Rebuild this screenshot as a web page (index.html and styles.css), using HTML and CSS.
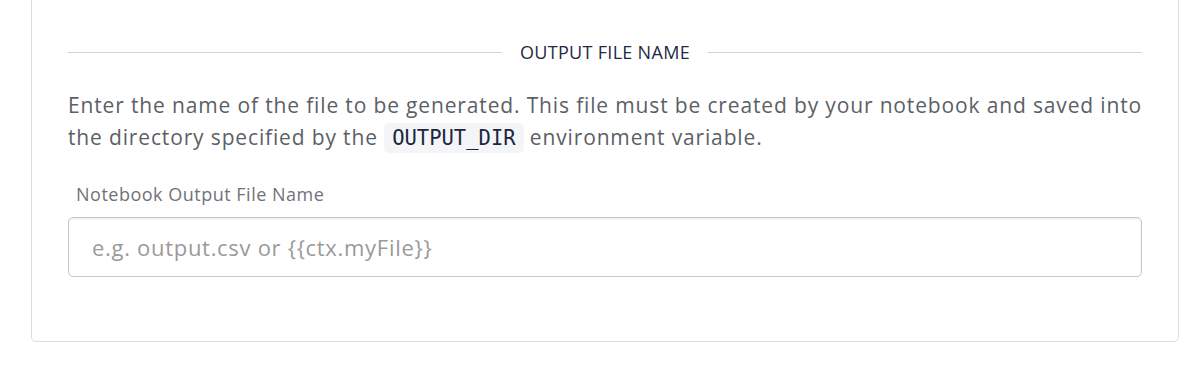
FILE: index.html
```html
<!DOCTYPE html>
<html lang="en">
<head>
  <meta charset="UTF-8">
  <title>Output File Name</title>
  <link rel="stylesheet" href="styles.css">
</head>
<body>

  <div class="card">

    <!-- Section divider -->
    <div class="divider">
      <span class="divider-line"></span>
      <span class="divider-title">OUTPUT FILE NAME</span>
      <span class="divider-line"></span>
    </div>

    <p class="help">
      Enter the name of the file to be generated. This file must be created by your notebook and saved into
      the directory specified by the <code>OUTPUT_DIR</code> environment variable.
    </p>

    <div class="field">
      <label class="field-label" for="outputFile">Notebook Output File Name</label>
      <input class="field-input" id="outputFile" type="text" placeholder="e.g. output.csv or {{ctx.myFile}}">
    </div>

  </div>

</body>
</html>
```

FILE: styles.css
```css
body {
  font-family: "Open Sans", "Noto Sans", sans-serif;
  background-color: #fff;
  margin: 0;
  padding: 0 20px 0 31px;
}

.card {
  width: 1074px;
  border: 1px solid #dcdcdc;
  border-top: none;
  border-radius: 0 0 5px 5px;
  padding: 37px 36px 64px 36px;
}

.divider {
  display: flex;
  align-items: center;
  gap: 18px;
}

.divider-line {
  flex: 1;
  height: 1px;
  background-color: #d3d3d3;
}

.divider-title {
  font-size: 18px;
  letter-spacing: 0.3px;
  color: #1f2a44;
  line-height: 30px;
}

.help {
  margin: 22px 0 0;
  font-size: 21px;
  letter-spacing: 0.85px;
  line-height: 32px;
  color: #5c5f66;
}

.help code {
  font-family: "DejaVu Sans Mono", monospace;
  font-size: 20.5px;
  letter-spacing: 0;
  color: #1c2640;
  background-color: #f4f5f7;
  border-radius: 5px;
  padding: 3px 8px;
}

.field {
  margin-top: 29px;
}

.field-label {
  display: block;
  font-size: 18px;
  letter-spacing: 0.5px;
  color: #707378;
  padding-left: 8px;
  line-height: 22px;
  margin-bottom: 12px;
}

.field-input {
  display: block;
  box-sizing: border-box;
  width: 100%;
  height: 60px;
  padding: 0 23px;
  font-family: "Open Sans", "Noto Sans", sans-serif;
  font-size: 22px;
  letter-spacing: 0.7px;
  color: #333;
  border: 1px solid #c8c8c8;
  border-radius: 5px;
  box-shadow: inset 0 1px 2px rgba(0, 0, 0, 0.08);
}

.field-input::placeholder {
  color: #9a9a9a;
}
```
